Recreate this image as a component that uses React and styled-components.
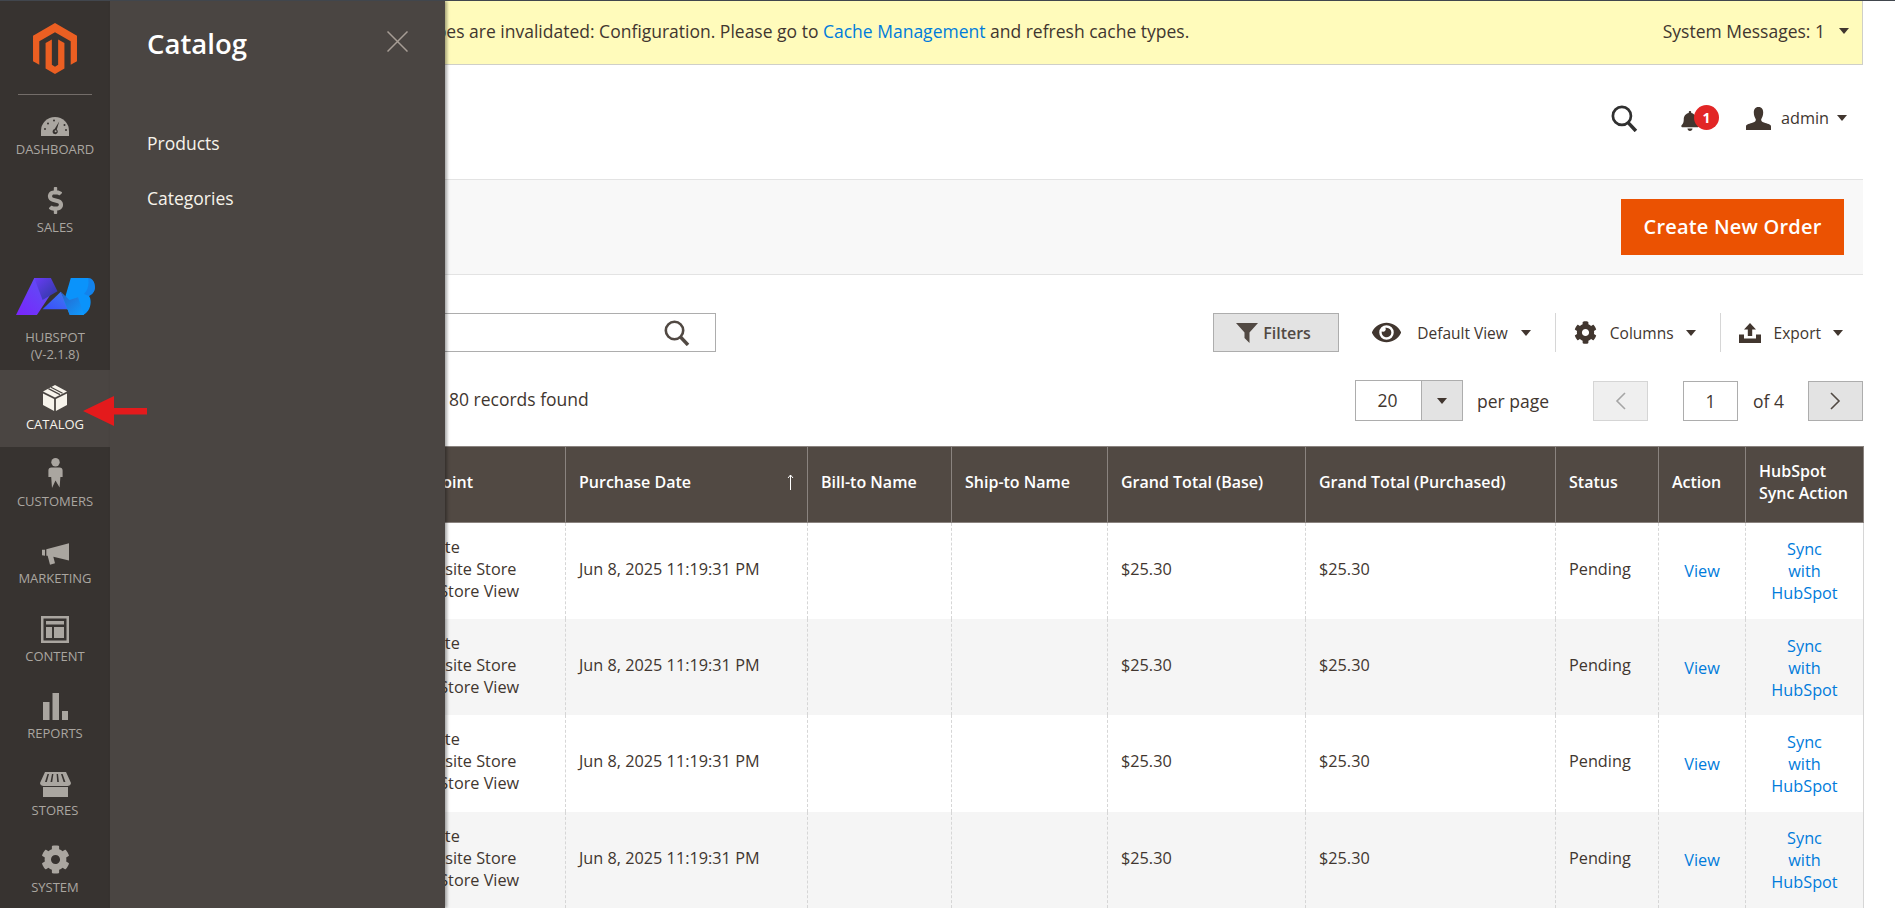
import React from "react";
import styled, { createGlobalStyle } from "styled-components";
import { FaDollarSign, FaCog, FaBell, FaEye } from "react-icons/fa";

const GlobalStyle = createGlobalStyle`
    html, body {
        margin: 0;
        padding: 0;
        background: #fff;
        height: 100%;
        overflow: hidden;
    }
    body {
        font-family: "Open Sans", "Liberation Sans", sans-serif;
        color: #41362f;
        font-size: 17.5px;
    }
    * { box-sizing: border-box; }
    a { color: #007bdb; text-decoration: none; }
`;

const Page = styled.div`
    position: relative;
    display: flex;
    height: 908px;
    overflow: hidden;
    border-top: 1px solid #41464d;
`;

const Sidebar = styled.nav`
    flex: 0 0 110px;
    background: #373330;
    display: flex;
    flex-direction: column;
`;

const LogoBox = styled.div`
    flex: none;
    height: 94px;
    padding-top: 22px;
    display: flex;
    justify-content: center;
    position: relative;
    &:after {
        content: "";
        position: absolute;
        left: 18px;
        right: 18px;
        bottom: 0;
        height: 1px;
        background: #736d69;
    }
`;

const NavItem = styled.div`
    flex: none;
    height: ${(p) => p.$height || 77.2}px;
    background: ${(p) => (p.$active ? "#4a4542" : "transparent")};
    color: ${(p) => (p.$active ? "#f7f3eb" : "#aaa6a0")};
    display: flex;
    flex-direction: column;
    align-items: center;
    text-transform: uppercase;
    font-size: 13px;
    line-height: 17px;
    text-align: center;
`;

const IconSlot = styled.div`
    height: ${(p) => p.$height || 41}px;
    margin-bottom: ${(p) => p.$gap || 5}px;
    flex: none;
    display: flex;
    align-items: flex-end;
    justify-content: center;
`;

const SubPanel = styled.aside`
    position: absolute;
    left: 110px;
    top: 0;
    bottom: 0;
    width: 335px;
    background: #4a4542;
    box-shadow: 2px 0 3px rgba(0, 0, 0, 0.35);
    padding: 23px 36px 0 37px;
    color: #f7f3eb;
    z-index: 3;
`;

const PanelTitle = styled.div`
    display: flex;
    justify-content: space-between;
    align-items: flex-start;
    font-size: 27.5px;
    font-weight: 600;
    line-height: 40px;
    color: #fff;
    margin-bottom: 67px;
`;

const CloseIcon = styled.svg`
    width: 21px;
    height: 21px;
    margin: 7px 1px 0 0;
`;

const PanelLink = styled.div`
    font-size: 17.5px;
    line-height: 24px;
    height: 55px;
`;

const Pointer = styled.svg`
    position: absolute;
    left: 83px;
    top: 394px;
    z-index: 4;
`;

const Main = styled.main`
    flex: 1;
    min-width: 0;
    padding-right: 32px;
`;

const Notice = styled.div`
    height: 64px;
    background: #fffbbb;
    border-bottom: 1px solid #cfcfc8;
    border-right: 1px solid #cfcfc8;
    display: flex;
    align-items: center;
    justify-content: space-between;
    padding: 0 13px 4px 253px;
    white-space: nowrap;
`;

const Caret = styled.span`
    display: inline-block;
    flex: none;
    width: 0;
    height: 0;
    border-left: 5px solid transparent;
    border-right: 5px solid transparent;
    border-top: 6px solid #41362f;
    margin-left: ${(p) => p.$gap ?? 12}px;
`;

const Messages = styled.div`
    display: flex;
    align-items: center;
`;

const Header = styled.header`
    height: 114px;
    display: flex;
    align-items: center;
    justify-content: flex-end;
    padding: 0 16px 8px 0;
`;

const Bell = styled.div`
    position: relative;
    margin-left: 42px;
    width: 39px;
    height: 26px;
    display: flex;
    align-items: flex-end;
    color: #41362f;
`;

const Badge = styled.span`
    position: absolute;
    left: 14px;
    top: 0;
    width: 25px;
    height: 25px;
    border-radius: 50%;
    background: #e22626;
    color: #fff;
    font-size: 14px;
    font-weight: 700;
    line-height: 25px;
    text-align: center;
`;

const UserName = styled.span`
    margin-left: 10px;
    font-size: 16.25px;
`;

const PageActions = styled.div`
    height: 96px;
    background: #f8f8f8;
    border-top: 1px solid #e3e3e3;
    border-bottom: 1px solid #e3e3e3;
    display: flex;
    align-items: center;
    justify-content: flex-end;
    padding: 0 19px 0 0;
`;

const PrimaryButton = styled.button`
    width: 223px;
    height: 56px;
    border: 0;
    padding: 0 0 2px;
    background: #eb5202;
    color: #fff;
    font-family: inherit;
    font-size: 20px;
    font-weight: 600;
    letter-spacing: 0.2px;
`;

const ToolRow = styled.div`
    display: flex;
    align-items: center;
    justify-content: space-between;
    margin-top: ${(p) => p.$top}px;
    padding-left: 32px;
    height: ${(p) => p.$height}px;
`;

const SearchBox = styled.div`
    width: 574px;
    height: 39px;
    border: 1px solid #adadad;
    display: flex;
    align-items: center;
    justify-content: flex-end;
    padding-right: 25px;
`;

const Group = styled.div`
    display: flex;
    align-items: center;
`;

const FilterButton = styled.button`
    width: 126px;
    height: 39px;
    background: #e3e3e3;
    border: 1px solid #adadad;
    color: #514943;
    font-family: inherit;
    font-size: 16px;
    font-weight: 600;
    display: flex;
    align-items: center;
    gap: 5px;
    padding: 0 0 0 22px;
`;

const ViewAction = styled.div`
    display: flex;
    align-items: center;
    font-size: 15.5px;
    color: #41362f;
    margin-left: ${(p) => p.$left}px;
    margin-right: ${(p) => p.$right}px;
    svg { flex: none; margin-right: ${(p) => p.$gap}px; }
`;

const ToolDivider = styled.span`
    width: 1px;
    height: 39px;
    background: #d6d6d6;
`;

const RecordCount = styled.span`
    margin-left: 307px;
    margin-top: -4px;
`;

const PerPage = styled.div`
    display: flex;
    width: 108px;
    height: 41px;
    border: 1px solid #adadad;
`;

const PerPageValue = styled.div`
    flex: 1;
    text-align: center;
    line-height: 39px;
    padding-right: 2px;
    font-size: 17.5px;
`;

const PerPageToggle = styled.div`
    width: 41px;
    background: #e3e3e3;
    display: flex;
    align-items: center;
    justify-content: center;
    border-left: 1px solid #adadad;
`;

const PagerLabel = styled.span`
    margin-left: ${(p) => p.$left}px;
    color: #41362f;
`;

const PagerButton = styled.div`
    width: 55px;
    height: 40px;
    margin-left: ${(p) => p.$left}px;
    background: ${(p) => (p.$disabled ? "#efefef" : "#e3e3e3")};
    border: 1px solid ${(p) => (p.$disabled ? "#d5d5d5" : "#adadad")};
    display: flex;
    align-items: center;
    justify-content: center;
`;

const PagerInput = styled.div`
    width: 55px;
    height: 40px;
    margin-left: ${(p) => p.$left}px;
    border: 1px solid #adadad;
    text-align: center;
    line-height: 38px;
`;

const Grid = styled.table`
    table-layout: fixed;
    border-collapse: collapse;
    width: 1721px;
    margin: 25px 0 0 32px;
    font-size: 16.25px;
    line-height: 22px;
`;

const Th = styled.th`
    background: #514943;
    color: #fff;
    font-size: 16px;
    font-weight: 600;
    text-align: left;
    position: relative;
    height: 76px;
    padding: 0 12px 5px 13px;
    border: 1px solid #8a837f;
`;

const SortMark = styled.svg`
    position: absolute;
    right: 13px;
    top: 27px;
`;

const Row = styled.tr`
    background: ${(p) => (p.$alt ? "#f5f5f5" : "#fff")};
    height: 96.4px;
`;

const Td = styled.td`
    padding: ${(p) => (p.$action ? "1px 12px 0" : "0 12px 4px 13px")};
    border-left: 1px dashed #d6d6d6;
    border-right: 1px dashed #d6d6d6;
    text-align: ${(p) => (p.$action ? "center" : "left")};
    vertical-align: middle;
    white-space: nowrap;
    &:last-child { border-right: 1px solid #d6d6d6; }
`;

const columns = [201, 222, 242, 144, 156, 198, 250, 103, 87, 118];

function MagentoLogo() {
    return (
        <svg width="44" height="51" viewBox="1.6 0 20.8 24">
            <path fill="#eb5f22" d="M12 24l-4.455-2.572v-12l2.97-1.715v12.001l1.485.902 1.485-.902V7.713l2.971 1.715v12L12 24zM22.391 6v12l-2.969 1.714V8.572L12 4.286 4.578 8.572v11.143L1.609 18V6L12 0l10.391 6z" />
        </svg>
    );
}

function HubspotLogo() {
    return (
        <svg width="79" height="37" viewBox="45 52 238 111" preserveAspectRatio="none">
            <defs>
                <linearGradient id="hsLeg" x1="0" y1="1" x2="1" y2="0">
                    <stop offset="0" stopColor="#7a24fb" />
                    <stop offset="1" stopColor="#5a55f5" />
                </linearGradient>
                <linearGradient id="hsFold" x1="0" y1="0" x2="1" y2="1">
                    <stop offset="0" stopColor="#6a3cf8" />
                    <stop offset="1" stopColor="#2b3a9c" />
                </linearGradient>
                <linearGradient id="hsMid" x1="0" y1="1" x2="1" y2="0">
                    <stop offset="0" stopColor="#3a4cfb" />
                    <stop offset="1" stopColor="#3f7cf0" />
                </linearGradient>
                <linearGradient id="hsRight" x1="0" y1="0" x2="1" y2="1">
                    <stop offset="0" stopColor="#2a62c8" />
                    <stop offset="1" stopColor="#0d9cff" />
                </linearGradient>
            </defs>
            <polygon fill="url(#hsLeg)" points="45,163 100,52 128,52 150,100 108,163" />
            <polygon fill="url(#hsFold)" points="100,52 150,52 170,92 125,118" />
            <polygon fill="url(#hsMid)" points="125,146 180,93 205,146" />
            <path fill="#0a93fb" d="M210 52H262C276 52 283 66 283 80C283 92 275 102 265 106C272 115 272 135 262 150C256 158 250 163 240 163H207L190 120Z" />
            <path fill="#1e6fd8" opacity="0.45" d="M262 52C276 52 283 66 283 80C283 92 275 102 265 106L250 100C262 88 266 68 262 52Z" />
            <polygon fill="url(#hsRight)" points="180,93 206,118 232,110 250,163 207,163" />
        </svg>
    );
}

const iconColor = "currentColor";

function DashboardIcon() {
    return (
        <svg width="28" height="20" viewBox="0 0 28 20">
            <path fill={iconColor} d="M0 20V15A14 14 0 0 1 28 15V20Z" />
            <g fill="#373330">
                <circle cx="4" cy="13" r="1" />
                <circle cx="7" cy="7.5" r="1" />
                <circle cx="13" cy="4.5" r="1" />
                <circle cx="23.5" cy="9" r="1" />
                <circle cx="25" cy="14" r="1" />
                <path d="M18.2 5.5L15.8 13.5A2.6 2.6 0 1 1 13.6 13Z" />
            </g>
            <circle cx="14.6" cy="15.2" r="1" fill={iconColor} />
        </svg>
    );
}

function BoxIcon() {
    return (
        <svg width="24" height="26" viewBox="0 0 24 26">
            <path fill={iconColor} d="M12 0L24 6.5L12 12.6L0 6.5ZM0 8.4L11.1 14V26L0 20ZM24 8.4V20L12.9 26V14Z" />
            <path stroke="#4a4542" strokeWidth="1.2" fill="none" d="M5.4 3.6L17 9.6M8 2.2L19.6 8.2" />
        </svg>
    );
}

function CustomerIcon() {
    return (
        <svg width="15" height="30" viewBox="0 0 15 30">
            <circle cx="7.5" cy="4.2" r="4.2" fill={iconColor} />
            <path fill={iconColor} d="M3.5 9.5H11.5C13.5 9.5 14.6 10.8 14.6 12.5V19H12.4L11.6 29.5L7.5 22.5L4 30L3.2 19H.4V12.5C.4 10.8 1.5 9.5 3.5 9.5Z" />
        </svg>
    );
}

function MarketingIcon() {
    return (
        <svg width="27" height="22" viewBox="0 0 81 65">
            <path fill={iconColor} d="M0 20H9V38L0 36ZM13 18L81 0V52L34 41L39 60L24 65L17 38H13Z" />
        </svg>
    );
}

function ContentIcon() {
    return (
        <svg width="28" height="27" viewBox="0 0 28 27">
            <path fill={iconColor} fillRule="evenodd" d="M0 0H28V27H0ZM2.5 2.5V24.5H25.5V2.5Z" />
            <path fill={iconColor} d="M5 5H23V8.5H5ZM5 11H11V22H5ZM13 11H23V22H13Z" />
        </svg>
    );
}

function ReportsIcon() {
    return (
        <svg width="25" height="27" viewBox="0 0 25 27">
            <path fill={iconColor} d="M0 9H6.5V27H0ZM9.5 0H16V27H9.5ZM19 18H25V27H19Z" />
        </svg>
    );
}

function StoresIcon() {
    return (
        <svg width="31" height="25" viewBox="0 0 31 25">
            <path fill={iconColor} fillRule="evenodd" d="M5 0H26L31 11C31 13 29 14 27.5 14H3.5C2 14 0 13 0 11ZM7.5 2L5 10H6.8L9 2ZM12 2L10.5 10H12.2L13.4 2ZM16.6 2L17.2 10H18.9L18 2ZM21 2L23.6 10H25.4L22.6 2Z" />
            <path fill={iconColor} d="M3 15H28V25H3Z" />
        </svg>
    );
}

function SearchIcon({ size, color }) {
    return (
        <svg width={size} height={size} viewBox="0 0 26 26" fill="none" stroke={color}>
            <circle cx="10.5" cy="10.5" r="8.7" strokeWidth="2.6" />
            <path d="M16.5 17L24 25" strokeWidth="3.4" />
        </svg>
    );
}

function UserIcon() {
    return (
        <svg width="25" height="23" viewBox="0 0 25 23" style={{ marginLeft: 27 }}>
            <path fill="#41362f" d="M12.5 0C16 0 17.2 2.6 17.2 5.6C17.2 8.6 16 11 15.2 12.2C15 13.8 15.8 14.6 18 15.6C21 16.8 25 17.2 25 19.5V23H0V19.5C0 17.2 4 16.8 7 15.6C9.2 14.6 10 13.8 9.8 12.2C9 11 7.8 8.6 7.8 5.6C7.8 2.6 9 0 12.5 0Z" />
        </svg>
    );
}

function FunnelIcon() {
    return (
        <svg width="22" height="20" viewBox="0 0 22 20">
            <path fill="#514943" d="M0 0H22L13.5 9.5V20L8.5 15V9.5Z" />
        </svg>
    );
}

function ExportIcon() {
    return (
        <svg width="22" height="20" viewBox="0 0 22 20">
            <path fill="#41362f" d="M11 0L17 6.5H13.2V13H8.8V6.5H5ZM0 11.5H5V15.5H17V11.5H22V20H0Z" />
        </svg>
    );
}

function Chevron({ left, color }) {
    return (
        <svg width="11" height="18" viewBox="0 0 11 18" fill="none" stroke={color} strokeWidth="1.6">
            <path d={left ? "M10 1L2 9L10 17" : "M1 1L9 9L1 17"} />
        </svg>
    );
}

const orders = [0, 1, 2, 3];

const App = () => {
    return (
        <Page>
            <GlobalStyle />
            <Sidebar>
                <LogoBox>
                    <MagentoLogo />
                </LogoBox>
                <NavItem $height={78}>
                    <IconSlot><DashboardIcon /></IconSlot>
                    Dashboard
                </NavItem>
                <NavItem>
                    <IconSlot><FaDollarSign size={27} /></IconSlot>
                    Sales
                </NavItem>
                <NavItem $height={119.6}>
                    <IconSlot $height={65} $gap={14}><HubspotLogo /></IconSlot>
                    <span>Hubspot<br />(V-2.1.8)</span>
                </NavItem>
                <NavItem $active $height={77.4}>
                    <IconSlot><BoxIcon /></IconSlot>
                    Catalog
                </NavItem>
                <NavItem>
                    <IconSlot><CustomerIcon /></IconSlot>
                    Customers
                </NavItem>
                <NavItem>
                    <IconSlot><MarketingIcon /></IconSlot>
                    Marketing
                </NavItem>
                <NavItem>
                    <IconSlot><ContentIcon /></IconSlot>
                    Content
                </NavItem>
                <NavItem>
                    <IconSlot><ReportsIcon /></IconSlot>
                    Reports
                </NavItem>
                <NavItem>
                    <IconSlot><StoresIcon /></IconSlot>
                    Stores
                </NavItem>
                <NavItem>
                    <IconSlot><FaCog size={29} /></IconSlot>
                    System
                </NavItem>
            </Sidebar>

            <SubPanel>
                <PanelTitle>
                    Catalog
                    <CloseIcon viewBox="0 0 21 21" stroke="#a79d95" strokeWidth="1.5">
                        <path d="M.5.5L20.5 20.5M20.5.5L.5 20.5" />
                    </CloseIcon>
                </PanelTitle>
                <PanelLink>Products</PanelLink>
                <PanelLink>Categories</PanelLink>
            </SubPanel>

            <Pointer width="64" height="32" viewBox="0 0 64 32">
                <path fill="#e41a1c" d="M0 16L31 1V13H64V19.5H31V31Z" />
            </Pointer>

            <Main>
                <Notice>
                    <span>
                        Cache Types are invalidated: Configuration. Please go to <a href="#cache">Cache Management</a> and refresh cache types.
                    </span>
                    <Messages>
                        System Messages: 1
                        <Caret $gap={14} />
                    </Messages>
                </Notice>

                <Header>
                    <SearchIcon size={27} color="#303030" />
                    <Bell>
                        <FaBell size={20} />
                        <Badge>1</Badge>
                    </Bell>
                    <UserIcon />
                    <UserName>admin</UserName>
                    <Caret $gap={8} />
                </Header>

                <PageActions>
                    <PrimaryButton>Create New Order</PrimaryButton>
                </PageActions>

                <ToolRow $top={38} $height={39}>
                    <SearchBox>
                        <SearchIcon size={26} color="#514943" />
                    </SearchBox>
                    <Group>
                        <FilterButton>
                            <FunnelIcon />
                            Filters
                        </FilterButton>
                        <ViewAction $left={33} $right={24} $gap={16}>
                            <FaEye size={29} />
                            Default View
                            <Caret $gap={13} />
                        </ViewAction>
                        <ToolDivider />
                        <ViewAction $left={18} $right={24} $gap={13}>
                            <FaCog size={23} />
                            Columns
                            <Caret />
                        </ViewAction>
                        <ToolDivider />
                        <ViewAction $left={18} $right={20} $gap={13}>
                            <ExportIcon />
                            Export
                            <Caret />
                        </ViewAction>
                    </Group>
                </ToolRow>

                <ToolRow $top={28} $height={41}>
                    <RecordCount>80 records found</RecordCount>
                    <Group>
                        <PerPage>
                            <PerPageValue>20</PerPageValue>
                            <PerPageToggle><Caret $gap={0} /></PerPageToggle>
                        </PerPage>
                        <PagerLabel $left={14}>per page</PagerLabel>
                        <PagerButton $disabled $left={44}><Chevron left color="#a5a5a5" /></PagerButton>
                        <PagerInput $left={35}>1</PagerInput>
                        <PagerLabel $left={15}>of 4</PagerLabel>
                        <PagerButton $left={24}><Chevron color="#514943" /></PagerButton>
                    </Group>
                </ToolRow>

                <Grid>
                    <colgroup>
                        {columns.map((w, i) => <col key={i} width={w} />)}
                    </colgroup>
                    <thead>
                        <tr>
                            <Th />
                            <Th>Purchase Point</Th>
                            <Th>
                                Purchase Date
                                <SortMark width="7" height="16" viewBox="0 0 7 16" stroke="#fff" fill="none">
                                    <path d="M3.5 16V1M1 4L3.5 1L6 4" />
                                </SortMark>
                            </Th>
                            <Th>Bill-to Name</Th>
                            <Th>Ship-to Name</Th>
                            <Th>Grand Total (Base)</Th>
                            <Th>Grand Total (Purchased)</Th>
                            <Th>Status</Th>
                            <Th>Action</Th>
                            <Th>HubSpot<br />Sync Action</Th>
                        </tr>
                    </thead>
                    <tbody>
                        {orders.map((n) => (
                            <Row key={n} $alt={n % 2 === 1}>
                                <Td />
                                <Td>Main Website<br />Online Website Store<br />Wholesale Store View</Td>
                                <Td>Jun 8, 2025 11:19:31 PM</Td>
                                <Td />
                                <Td />
                                <Td>$25.30</Td>
                                <Td>$25.30</Td>
                                <Td>Pending</Td>
                                <Td $action><a href="#view">View</a></Td>
                                <Td $action><a href="#sync">Sync<br />with<br />HubSpot</a></Td>
                            </Row>
                        ))}
                    </tbody>
                </Grid>
            </Main>
        </Page>
    );
};

export default App;
